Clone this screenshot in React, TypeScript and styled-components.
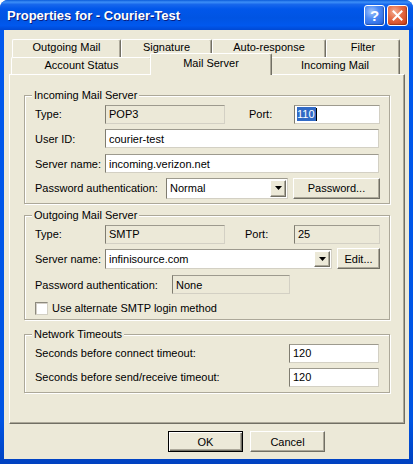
import React from "react";
import styled, { createGlobalStyle, css } from "styled-components";

const FACE = "#ECE9D8";
const SHADOW = "#ACA899";
const DARK = "#716F64";

const GlobalStyle = createGlobalStyle`
  html, body { margin: 0; padding: 0; background: #ffffff; }
  body { font-family: "Liberation Sans", Arial, sans-serif; font-size: 11px; color: #000; }
  * { box-sizing: border-box; }
`;

const Window = styled.div`
  width: 413px;
  height: 464px;
  display: flex;
  flex-direction: column;
  border-radius: 8px 8px 0 0;
  overflow: hidden;
  background: #0054e3;
`;

const TitleBar = styled.div`
  height: 30px;
  flex: none;
  display: flex;
  align-items: center;
  padding: 0 5px 0 7px;
  background: linear-gradient(
    180deg,
    #0a5bda 0%,
    #3d8ff7 7%,
    #1767ec 15%,
    #0157ea 30%,
    #0054e3 60%,
    #0058ee 85%,
    #0049d4 100%
  );
`;

const Title = styled.div`
  flex: 1;
  color: #fff;
  font: bold 13px "Liberation Sans", Arial, sans-serif;
  text-shadow: 1px 1px 0 #0a1e80;
  white-space: nowrap;
  padding-top: 1px;
`;

const CaptionButton = styled.div<{ $close?: boolean }>`
  flex: none;
  width: 21px;
  height: 21px;
  margin-left: 2px;
  border: 1px solid #fff;
  border-radius: 3px;
  display: flex;
  align-items: center;
  justify-content: center;
  color: #fff;
  font: bold 15px "Liberation Sans", Arial, sans-serif;
  background: ${(p) =>
    p.$close
      ? "radial-gradient(circle at 35% 30%, #f3ae94 0%, #e66d47 40%, #d2441c 85%, #c03a17 100%)"
      : "radial-gradient(circle at 35% 30%, #a4c4fa 0%, #4c8af4 40%, #2a68e4 85%, #1f58d2 100%)"};
  box-shadow: inset -1px -1px 1px rgba(0, 0, 0, 0.25);
`;

const Frame = styled.div`
  flex: 1;
  display: flex;
  padding: 0 5px 5px 4px;
  background: linear-gradient(180deg, #0058ee 0%, #0054e3 90%, #0041c0 100%);
`;

const Client = styled.div`
  flex: 1;
  display: flex;
  flex-direction: column;
  background: ${FACE};
  padding: 9px 4px 7px 5px;
`;

const TabRow = styled.div<{ $inset: number; $lift: number }>`
  flex: none;
  display: flex;
  padding-left: ${(p) => p.$inset}px;
  --tab-lift: ${(p) => p.$lift}px;
`;

const Tab = styled.div<{ $w: number; $h: number; $active?: boolean }>`
  flex: none;
  width: ${(p) => p.$w}px;
  height: ${(p) => p.$h}px;
  display: flex;
  align-items: center;
  justify-content: center;
  background: ${FACE};
  border-top: 1px solid #fff;
  border-left: 1px solid #fff;
  border-right: 1px solid ${DARK};
  box-shadow: inset -1px 0 0 ${SHADOW};
  border-radius: 2px 2px 0 0;
  padding-bottom: var(--tab-lift);
  white-space: nowrap;
  ${(p) =>
    p.$active &&
    css`
      width: ${p.$w + 4}px;
      height: ${p.$h + 5}px;
      margin: -4px -2px -1px;
      padding-bottom: 3px;
      z-index: 1;
    `}
`;

const Panel = styled.div`
  flex: 1;
  display: flex;
  flex-direction: column;
  border: 1px solid;
  border-color: #fff ${DARK} ${DARK} #fff;
  box-shadow: inset -1px -1px 0 ${SHADOW};
  padding: 20px 14px 0 14px;
`;

const Group = styled.div<{ $mt?: number; $pb: number }>`
  flex: none;
  margin-top: ${(p) => p.$mt ?? 0}px;
  border: 1px solid ${SHADOW};
  box-shadow: inset 1px 1px 0 #fff, 1px 1px 0 #fff;
  padding: 0 9px ${(p) => p.$pb}px 10px;
`;

const Legend = styled.div`
  width: fit-content;
  margin: -7px 0 0 -3px;
  padding: 0 2px;
  line-height: 13px;
  background: ${FACE};
  white-space: nowrap;
`;

const Row = styled.div<{ $h: number }>`
  height: ${(p) => p.$h}px;
  display: flex;
  align-items: center;
`;

const Label = styled.div<{ $w?: number; $ml?: number }>`
  flex: none;
  ${(p) => (p.$w ? `width: ${p.$w}px;` : "")}
  margin-left: ${(p) => p.$ml ?? 0}px;
  white-space: nowrap;
`;

const Field = styled.div<{ $w: number; $h?: number; $ro?: boolean; $ml?: number }>`
  flex: none;
  width: ${(p) => p.$w}px;
  height: ${(p) => p.$h ?? 19}px;
  margin-left: ${(p) => p.$ml ?? 0}px;
  display: flex;
  align-items: center;
  padding: 0 3px;
  background: ${(p) => (p.$ro ? FACE : "#fff")};
  border: 1px solid;
  border-color: #9d9a8e #d3d0c4 #d3d0c4 #7f7c70;
  white-space: nowrap;
  overflow: hidden;
`;

const Selection = styled.span`
  background: #316ac5;
  color: #fff;
  line-height: 14px;
  margin-left: -1px;
  padding: 0 1px 0 0;
`;

const Caret = styled.span`
  width: 1px;
  height: 13px;
  background: #000;
`;

const ComboText = styled.span`
  flex: 1;
`;

const DropButton = styled.div<{ $h: number }>`
  flex: none;
  width: 16px;
  height: ${(p) => p.$h}px;
  margin-right: -2px;
  display: flex;
  align-items: center;
  justify-content: center;
  background: ${FACE};
  border: 1px solid;
  border-color: #fff ${DARK} ${DARK} #fff;
  box-shadow: inset -1px -1px 0 ${SHADOW};
`;

const Button = styled.div<{ $w: number; $h?: number; $ml?: number; $default?: boolean }>`
  flex: none;
  width: ${(p) => p.$w}px;
  height: ${(p) => p.$h ?? 21}px;
  margin-left: ${(p) => p.$ml ?? 0}px;
  display: flex;
  align-items: center;
  justify-content: center;
  background: ${FACE};
  border: 1px solid;
  border-color: #fff ${DARK} ${DARK} #fff;
  box-shadow: inset -1px -1px 0 ${SHADOW};
  white-space: nowrap;
  ${(p) =>
    p.$default &&
    css`
      border-color: #000;
      box-shadow: inset 1px 1px 0 #fff, inset -1px -1px 0 ${DARK}, inset -2px -2px 0 ${SHADOW};
    `}
`;

const CheckBox = styled.div`
  flex: none;
  width: 13px;
  height: 13px;
  background: #fff;
  border: 1px solid;
  border-color: #8d8a7e #d3d0c4 #d3d0c4 #8d8a7e;
  box-shadow: inset 1px 1px 0 #d4d0c8;
`;

const Footer = styled.div`
  flex: none;
  display: flex;
  justify-content: flex-end;
  gap: 7px;
  margin-top: 7px;
  padding-right: 80px;
`;

const Arrow = () => (
  <svg width="7" height="4" viewBox="0 0 7 4">
    <path d="M0 0h7L3.5 4z" fill="#000" />
  </svg>
);

const CloseGlyph = () => (
  <svg width="11" height="11" viewBox="0 0 11 11">
    <path d="M1.5 1.5l8 8M9.5 1.5l-8 8" stroke="#fff" strokeWidth="2" strokeLinecap="square" />
  </svg>
);

export default function App() {
  return (
    <>
      <GlobalStyle />
      <Window>
        <TitleBar>
          <Title>Properties for - Courier-Test</Title>
          <CaptionButton>?</CaptionButton>
          <CaptionButton $close>
            <CloseGlyph />
          </CaptionButton>
        </TitleBar>
        <Frame>
          <Client>
            <TabRow $inset={3} $lift={4}>
              <Tab $w={109} $h={18}>Outgoing Mail</Tab>
              <Tab $w={91} $h={18}>Signature</Tab>
              <Tab $w={114} $h={18}>Auto-response</Tab>
              <Tab $w={74} $h={18}>Filter</Tab>
            </TabRow>
            <TabRow $inset={2} $lift={2}>
              <Tab $w={141} $h={17}>Account Status</Tab>
              <Tab $w={118} $h={17} $active>Mail Server</Tab>
              <Tab $w={130} $h={17}>Incoming Mail</Tab>
            </TabRow>
            <Panel>
              <Group $pb={3}>
                <Legend>Incoming Mail Server</Legend>
                <Row $h={24}>
                  <Label $w={70}>Type:</Label>
                  <Field $w={120} $ro>POP3</Field>
                  <Label $w={45} $ml={24}>Port:</Label>
                  <Field $w={86}>
                    <Selection>110</Selection>
                    <Caret />
                  </Field>
                </Row>
                <Row $h={25}>
                  <Label $w={70}>User ID:</Label>
                  <Field $w={274}>courier-test</Field>
                </Row>
                <Row $h={25}>
                  <Label $w={70}>Server name:</Label>
                  <Field $w={274}>incoming.verizon.net</Field>
                </Row>
                <Row $h={24}>
                  <Label $w={131}>Password authentication:</Label>
                  <Field $w={122} $h={21}>
                    <ComboText>Normal</ComboText>
                    <DropButton $h={17}>
                      <Arrow />
                    </DropButton>
                  </Field>
                  <Button $w={87} $ml={5}>Password...</Button>
                </Row>
              </Group>

              <Group $mt={11} $pb={1}>
                <Legend>Outgoing Mail Server</Legend>
                <Row $h={24}>
                  <Label $w={70}>Type:</Label>
                  <Field $w={120} $ro>SMTP</Field>
                  <Label $w={49} $ml={20}>Port:</Label>
                  <Field $w={86} $ro>25</Field>
                </Row>
                <Row $h={25}>
                  <Label $w={70}>Server name:</Label>
                  <Field $w={227} $h={20}>
                    <ComboText>infinisource.com</ComboText>
                    <DropButton $h={16}>
                      <Arrow />
                    </DropButton>
                  </Field>
                  <Button $w={43} $ml={5}>Edit...</Button>
                </Row>
                <Row $h={27}>
                  <Label $w={137}>Password authentication:</Label>
                  <Field $w={118} $ro>None</Field>
                </Row>
                <Row $h={20}>
                  <CheckBox />
                  <Label $ml={4}>Use alternate SMTP login method</Label>
                </Row>
              </Group>

              <Group $mt={14} $pb={3}>
                <Legend>Network Timeouts</Legend>
                <Row $h={24}>
                  <Label $w={254}>Seconds before connect timeout:</Label>
                  <Field $w={90}>120</Field>
                </Row>
                <Row $h={24}>
                  <Label $w={254}>Seconds before send/receive timeout:</Label>
                  <Field $w={90}>120</Field>
                </Row>
              </Group>
            </Panel>
            <Footer>
              <Button $w={75} $default>OK</Button>
              <Button $w={75}>Cancel</Button>
            </Footer>
          </Client>
        </Frame>
      </Window>
    </>
  );
}
